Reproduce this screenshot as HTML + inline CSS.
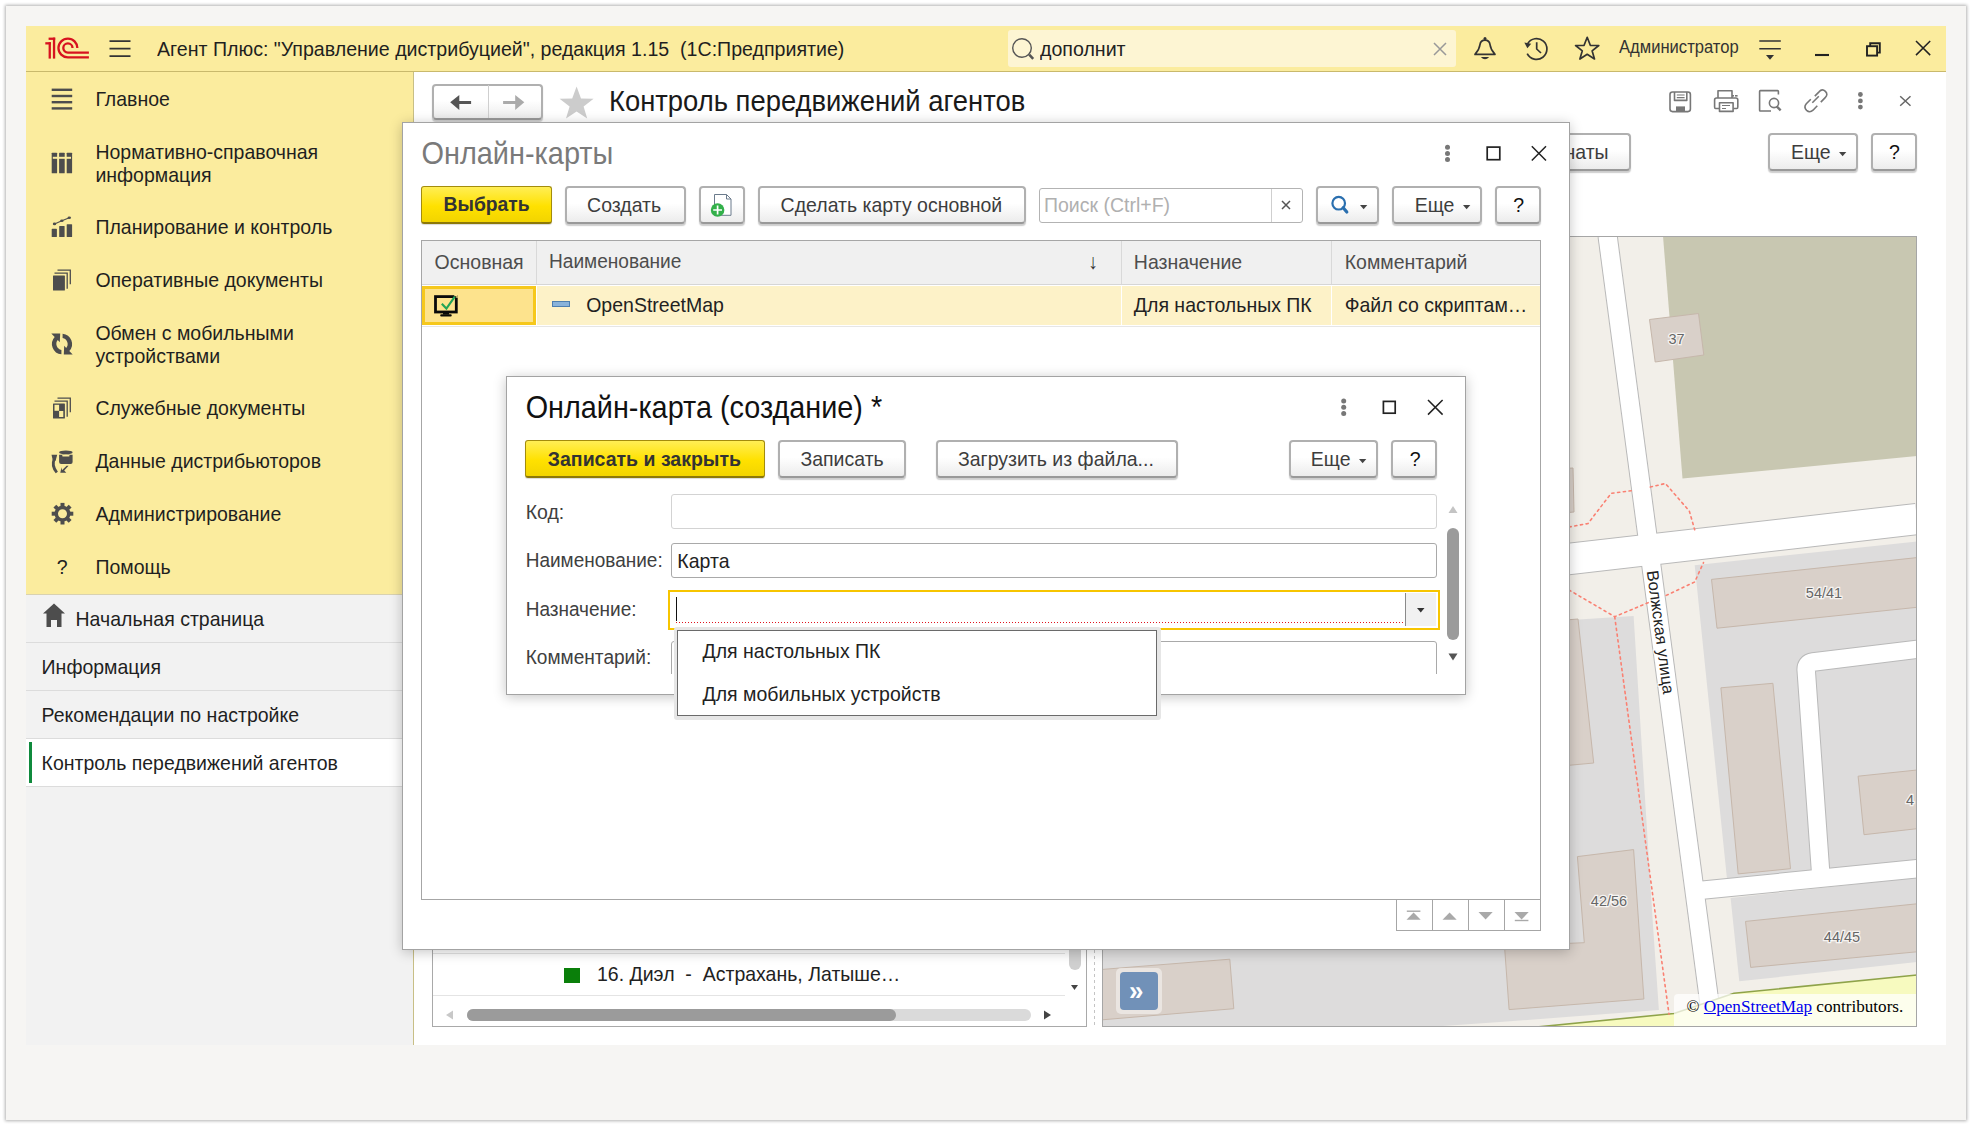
<!DOCTYPE html>
<html><head><meta charset="utf-8"><style>
html,body{margin:0;padding:0;width:1972px;height:1126px;overflow:hidden;background:#fff;}
body{position:relative;font-family:"Liberation Sans", sans-serif;}
.a{position:absolute;}
.t{position:absolute;white-space:pre;}
</style></head><body>
<div class="a" style="left:6px;top:6px;width:1960px;height:1114px;background:#f6f5f3;box-shadow:0 0 3px 1px rgba(0,0,0,0.30);"></div>
<div class="a" style="left:26px;top:26px;width:1920px;height:1019px;background:#fff;"></div>
<div class="a" style="left:26px;top:26px;width:1920px;height:45px;background:#fbec9e;"></div>
<div class="a" style="left:26px;top:71px;width:1920px;height:1px;background:#c9b96c;"></div>
<svg class="a" style="left:0px;top:0px;" width="140" height="72" viewBox="0 0 140 72"><g fill="#d7121f"><rect x="48.6" y="42.2" width="2.3" height="16.4"/><rect x="45.3" y="42.2" width="5.6" height="2.3"/><rect x="52.9" y="37.6" width="2.3" height="21"/><rect x="48.6" y="37.6" width="6.6" height="2.3"/></g><g fill="none" stroke="#d7121f" stroke-width="2.3"><path d="M77.35 48 A9.45 9.45 0 1 0 67.9 57.45 L88.9 57.45"/><path d="M72.5 48 A4.6 4.6 0 1 0 67.9 52.6 L88.9 52.6"/></g></svg>
<svg class="a" style="left:0px;top:0px;" width="140" height="72" viewBox="0 0 140 72"><g stroke="#333" stroke-width="1.8"><path d="M109.5 41.2H130.5M109.5 48.7H130.5M109.5 56.2H130.5"/></g></svg>
<div class="t" style="left:157.0px;top:36.90px;font-size:19.6px;line-height:24px;color:#1f1f1f;transform:scaleY(1.065);transform-origin:0 18.80px;">Агент Плюс: "Управление дистрибуцией", редакция 1.15  (1С:Предприятие)</div>
<div class="a" style="left:1008px;top:30px;width:448px;height:37px;background:#fdf5d3;border-radius:3px;"></div>
<svg class="a" style="left:1000px;top:26px;" width="460" height="46" viewBox="0 0 460 46"><circle cx="22" cy="22" r="9.3" fill="none" stroke="#555" stroke-width="1.4"/><path d="M29.2 28.6 L33.2 32.8" stroke="#555" stroke-width="2.6"/><path d="M434 17 L446 29 M446 17 L434 29" stroke="#999" stroke-width="1.5"/></svg>
<div class="t" style="left:1040.0px;top:36.90px;font-size:19.6px;line-height:24px;color:#222;transform:scaleY(1.065);transform-origin:0 18.80px;">дополнит</div>
<svg class="a" style="left:1460px;top:28px;" width="160" height="44" viewBox="0 0 160 44"><g fill="none" stroke="#333" stroke-width="1.7" stroke-linejoin="round"><path d="M15 26.4 C18.5 22.5 19.6 20 20 16.5 C20.5 13.5 22.2 12.2 25 12.2 C27.8 12.2 29.5 13.5 30 16.5 C30.4 20 31.5 22.5 35 26.4 Z"/><path d="M67.2 25.6 A10.4 10.4 0 1 0 67.5 15.8"/><path d="M76.7 14.2 V21 L81 25"/><path d="M127.2 9.3 L130.3 17.3 L138.8 17.5 L132.1 22.8 L134.5 31 L127.2 26.3 L119.9 31 L122.3 22.8 L115.6 17.5 L124.1 17.3 Z"/></g><circle cx="25" cy="10.6" r="1.5" fill="#333"/><path d="M20.8 28.9 H29.2 Q25 33.5 20.8 28.9 Z" fill="#333"/><path d="M64.3 14.6 L71.2 15.8 L67.4 20.3 Z" fill="#333"/></svg>
<div class="t" style="left:1619.0px;top:37.44px;font-size:16.6px;line-height:21px;color:#333;transform:scaleY(1.065);transform-origin:0 16.26px;">Администратор</div>
<svg class="a" style="left:1740px;top:30px;" width="206" height="36" viewBox="0 0 206 36"><g stroke="#333" stroke-width="1.6"><path d="M19.3 11 H40.8 M19.3 18.8 H40.8"/></g><path d="M26 25 H34 L30 29.8 Z" fill="#333"/><path d="M75 25 H89" stroke="#222" stroke-width="2.1"/><g fill="none" stroke="#222" stroke-width="1.9"><rect x="127" y="16.2" width="10.1" height="9.4"/><path d="M130.2 16.2 V13.3 H139.8 V22.6 H137.1"/></g><path d="M176 11 L190.2 25.1 M190.2 11 L176 25.1" stroke="#222" stroke-width="1.5"/></svg>
<div class="a" style="left:26px;top:72px;width:387px;height:522px;background:#fbec9e;"></div>
<div class="a" style="left:26px;top:594px;width:387px;height:451px;background:#f2f2f2;"></div>
<div class="a" style="left:413px;top:72px;width:1px;height:973px;background:#c8bf86;"></div>
<div class="t" style="left:95.4px;top:86.94px;font-size:19.5px;line-height:24px;color:#1f1f1f;transform:scaleY(1.065);transform-origin:0 18.76px;">Главное</div>
<div class="t" style="left:95.4px;top:140.24px;font-size:19.5px;line-height:24px;color:#1f1f1f;transform:scaleY(1.065);transform-origin:0 18.76px;">Нормативно-справочная</div>
<div class="t" style="left:95.4px;top:163.24px;font-size:19.5px;line-height:24px;color:#1f1f1f;transform:scaleY(1.065);transform-origin:0 18.76px;">информация</div>
<div class="t" style="left:95.4px;top:214.94px;font-size:19.5px;line-height:24px;color:#1f1f1f;transform:scaleY(1.065);transform-origin:0 18.76px;">Планирование и контроль</div>
<div class="t" style="left:95.4px;top:268.14px;font-size:19.5px;line-height:24px;color:#1f1f1f;transform:scaleY(1.065);transform-origin:0 18.76px;">Оперативные документы</div>
<div class="t" style="left:95.4px;top:320.94px;font-size:19.5px;line-height:24px;color:#1f1f1f;transform:scaleY(1.065);transform-origin:0 18.76px;">Обмен с мобильными</div>
<div class="t" style="left:95.4px;top:343.94px;font-size:19.5px;line-height:24px;color:#1f1f1f;transform:scaleY(1.065);transform-origin:0 18.76px;">устройствами</div>
<div class="t" style="left:95.4px;top:395.94px;font-size:19.5px;line-height:24px;color:#1f1f1f;transform:scaleY(1.065);transform-origin:0 18.76px;">Служебные документы</div>
<div class="t" style="left:95.4px;top:449.34px;font-size:19.5px;line-height:24px;color:#1f1f1f;transform:scaleY(1.065);transform-origin:0 18.76px;">Данные дистрибьюторов</div>
<div class="t" style="left:95.4px;top:501.94px;font-size:19.5px;line-height:24px;color:#1f1f1f;transform:scaleY(1.065);transform-origin:0 18.76px;">Администрирование</div>
<div class="t" style="left:95.4px;top:555.34px;font-size:19.5px;line-height:24px;color:#1f1f1f;transform:scaleY(1.065);transform-origin:0 18.76px;">Помощь</div>
<svg class="a" style="left:0px;top:0px;" width="100" height="600" viewBox="0 0 100 600"><g fill="#4d4d4d"><rect x="51.7" y="88.6" width="20.5" height="2.4"/><rect x="51.7" y="94.8" width="20.5" height="2.4"/><rect x="51.7" y="101" width="20.5" height="2.4"/><rect x="51.7" y="107.2" width="20.5" height="2.4"/><rect x="51.7" y="152.7" width="5.4" height="20.6" rx="0.6"/><rect x="59.1" y="152.7" width="5.6" height="20.6" rx="0.6"/><rect x="66.7" y="152.7" width="5.4" height="20.6" rx="0.6"/><rect x="51.7" y="228.8" width="5.2" height="8.2" rx="0.6"/><rect x="59.2" y="225.9" width="5.4" height="11.1" rx="0.6"/><rect x="66.7" y="224.2" width="5.4" height="12.8" rx="0.6"/><ellipse cx="54.5" cy="223.9" rx="1.7" ry="1.3"/><ellipse cx="61.9" cy="220.8" rx="1.7" ry="1.3"/><ellipse cx="69.3" cy="217.8" rx="1.7" ry="1.3"/><rect x="53" y="275.5" width="11.9" height="15.1" rx="0.5"/><rect x="53" y="403.5" width="11.9" height="15.1" rx="0.5"/></g><rect x="52.8" y="156.8" width="18.2" height="2" fill="#fbec9e"/><g fill="none" stroke="#4d4d4d" stroke-width="1.1"><path d="M54.5 223.9 L61.9 220.8 L69.3 217.8"/></g><g fill="none" stroke="#4d4d4d" stroke-width="1.3"><path d="M54.5 273.2 H67.2 V288.7 M57.5 270.1 H70.3 V284.2"/><path d="M54.5 401.2 H67.2 V416.7 M57.5 398.1 H70.3 V412.2"/></g><g fill="#fbec9e"><rect x="54.5" y="404.8" width="4.6" height="6"/><rect x="59.1" y="411" width="4.2" height="6"/></g><g fill="#4d4d4d" transform="translate(46 328)"><path d="M15.4 26.3 A10.4 10.4 0 0 1 8.7 8.9 L5.3 5.6 L14.2 5.6 L13.8 14.3 L11.8 12.1 A6 6 0 0 0 15.4 21.9 Z"/><path d="M15.4 26.3 A10.4 10.4 0 0 1 8.7 8.9 L5.3 5.6 L14.2 5.6 L13.8 14.3 L11.8 12.1 A6 6 0 0 0 15.4 21.9 Z" transform="rotate(180 16 16)"/></g><g fill="#4d4d4d"><ellipse cx="65.85" cy="452.4" rx="6.75" ry="1.9"/><path d="M59.1 454.8 H72.6 V462 Q72.6 463.9 70.6 463.9 H61.1 Q59.1 463.9 59.1 462 Z"/><path d="M51.5 454.8 H57.2 L55.6 460.8 L52.9 460.8 Z"/><path d="M60.3 472.7 H66.3 L64.2 470.5 L68.6 465.7 L66.6 465.7 L62 470.2 L61.5 467.3 Z"/></g><path d="M54.3 459 Q51.2 465.5 56.8 472.5" fill="none" stroke="#4d4d4d" stroke-width="2.8"/><ellipse cx="65.85" cy="455.7" rx="3.8" ry="0.9" fill="#fbec9e"/><g transform="translate(62.5 513.7)"><g fill="#4d4d4d"><rect x="-2" y="-10.8" width="4" height="5" transform="rotate(0)"/><rect x="-2" y="-10.8" width="4" height="5" transform="rotate(45)"/><rect x="-2" y="-10.8" width="4" height="5" transform="rotate(90)"/><rect x="-2" y="-10.8" width="4" height="5" transform="rotate(135)"/><rect x="-2" y="-10.8" width="4" height="5" transform="rotate(180)"/><rect x="-2" y="-10.8" width="4" height="5" transform="rotate(225)"/><rect x="-2" y="-10.8" width="4" height="5" transform="rotate(270)"/><rect x="-2" y="-10.8" width="4" height="5" transform="rotate(315)"/></g><circle r="6.2" fill="none" stroke="#4d4d4d" stroke-width="3.4"/></g></svg>
<div class="t" style="left:56.7px;top:555.34px;font-size:19.5px;line-height:24px;color:#222;transform:scaleY(1.065);transform-origin:0 18.76px;">?</div>
<div class="a" style="left:26px;top:594px;width:387px;height:1px;background:#d9d2b0;"></div>
<div class="a" style="left:26px;top:642px;width:387px;height:1px;background:#dcdcdc;"></div>
<div class="a" style="left:26px;top:690px;width:387px;height:1px;background:#dcdcdc;"></div>
<div class="a" style="left:26px;top:738px;width:387px;height:1px;background:#dcdcdc;"></div>
<div class="a" style="left:26px;top:786px;width:387px;height:1px;background:#dcdcdc;"></div>
<div class="a" style="left:26px;top:739px;width:387px;height:47px;background:#fff;"></div>
<div class="a" style="left:29px;top:742px;width:3px;height:41px;background:#0f8a3c;"></div>
<svg class="a" style="left:40px;top:600px;" width="30" height="30" viewBox="0 0 30 30"><path fill="#4d4d4d" d="M3 13.5 L14 3.5 L25 13.5 H21.5 V27 H17 V20 H11 V27 H6.5 V13.5 Z"/></svg>
<div class="t" style="left:75.5px;top:606.94px;font-size:19.5px;line-height:24px;color:#1f1f1f;transform:scaleY(1.065);transform-origin:0 18.76px;">Начальная страница</div>
<div class="t" style="left:41.6px;top:654.94px;font-size:19.5px;line-height:24px;color:#1f1f1f;transform:scaleY(1.065);transform-origin:0 18.76px;">Информация</div>
<div class="t" style="left:41.6px;top:703.24px;font-size:19.5px;line-height:24px;color:#1f1f1f;transform:scaleY(1.065);transform-origin:0 18.76px;">Рекомендации по настройке</div>
<div class="t" style="left:41.6px;top:750.74px;font-size:19.5px;line-height:24px;color:#1f1f1f;transform:scaleY(1.065);transform-origin:0 18.76px;">Контроль передвижений агентов</div>
<div class="a" style="left:432px;top:84px;width:111px;height:36px;border:2px solid #b0b0b0;border-bottom:2px solid #999;border-radius:4px;box-sizing:border-box;background:linear-gradient(#ffffff 45%,#ececec);box-shadow:0 1.5px 1.2px rgba(0,0,0,0.2);border-radius:4px;"></div>
<div class="a" style="left:488px;top:85px;width:1px;height:33px;background:#cfcfcf;"></div>
<svg class="a" style="left:440px;top:88px;" width="100" height="30" viewBox="0 0 100 30"><path d="M10.2 14.2 L19.3 6.9 V12.9 H31.1 V16.1 H19.3 V22 Z" fill="#555"/><path d="M84.3 14.2 L75.2 6.9 V12.9 H63.1 V16.1 H75.2 V22 Z" fill="#aaa"/></svg>
<svg class="a" style="left:556px;top:84px;" width="42" height="38" viewBox="0 0 42 38"><path d="M20.6 2.6 L25 14.6 L37.6 14.8 L27.6 22.6 L31.2 34.6 L20.6 27.4 L10 34.6 L13.6 22.6 L3.6 14.8 L16.2 14.6 Z" fill="#cccccc"/></svg>
<div class="t" style="left:609.0px;top:85.00px;font-size:27.4px;line-height:34px;color:#1a1a1a;transform:scaleY(1.07);transform-origin:0 26.50px;">Контроль передвижений агентов</div>
<svg class="a" style="left:1660px;top:84px;" width="260" height="34" viewBox="0 0 260 34"><g fill="none" stroke="#777" stroke-width="1.6" stroke-linejoin="round"><rect x="10" y="8" width="20.4" height="19.6" rx="2.5"/><path d="M14.5 8 V16.4 H26.8 V8"/><path d="M16.8 11 H24.6 M16.8 13.6 H24.6" stroke-width="1.2"/><path d="M58 14 V6.8 H72 V14"/><path d="M59 24.5 H55.6 Q54.6 24.5 54.6 23 V16 Q54.6 14 56.6 14 H75.8 Q77.8 14 77.8 16 V23 Q77.8 24.5 76.8 24.5 H73.5"/><rect x="59.5" y="18.8" width="13.6" height="8.6"/><path d="M62 21.5 H70 M62 24.5 H66" stroke-width="1.2"/><path d="M111 27 H100.2 Q99.6 27 99.6 26.2 V7.4 Q99.6 6.6 100.4 6.6 H117.6 Q118.4 6.6 118.4 7.4 V10.5"/><circle cx="114" cy="19" r="4.6"/><g transform="translate(-1.2 -3.2)"><path d="M152 18.5 L147.5 23 Q144.6 26.4 147.8 29.6 Q151 32.4 154.2 29.4 L158.5 25"/><path d="M156 15.3 L160.5 10.8 Q163.4 7.4 166.6 10.6 Q169.6 13.8 166.4 16.8 L162 21.3"/><path d="M153.5 22 L160 15.5"/></g></g><g fill="#777"><rect x="75" y="11" width="2.6" height="1.6"/><rect x="72" y="11" width="2" height="1.6"/><rect x="16" y="22.4" width="9" height="5.2"/><path d="M117.5 21.5 L121.5 25.5 L119.8 27.2 L115.8 23.2 Z"/><circle cx="200.4" cy="10.5" r="2.4"/><circle cx="200.4" cy="16.9" r="2.4"/><circle cx="200.4" cy="23.1" r="2.4"/></g><path d="M240.2 12.3 L250.5 21.8 M250.5 12.3 L240.2 21.8" stroke="#666" stroke-width="1.5"/></svg>
<div class="a" style="left:1500px;top:133px;width:131px;height:38px;border:2px solid #b0b0b0;border-bottom:2px solid #999;border-radius:4px;box-sizing:border-box;background:linear-gradient(#ffffff 45%,#ececec);box-shadow:0 1.5px 1.2px rgba(0,0,0,0.2);"></div>
<div class="t" style="left:1564.5px;top:139.84px;font-size:19.5px;line-height:24px;color:#3d3d3d;transform:scaleY(1.065);transform-origin:0 18.76px;">наты</div>
<div class="a" style="left:1768px;top:133px;width:90px;height:38px;border:2px solid #b0b0b0;border-bottom:2px solid #999;border-radius:4px;box-sizing:border-box;background:linear-gradient(#ffffff 45%,#ececec);box-shadow:0 1.5px 1.2px rgba(0,0,0,0.2);"></div>
<div class="t" style="left:1791.0px;top:139.84px;font-size:19.5px;line-height:24px;color:#3d3d3d;transform:scaleY(1.065);transform-origin:0 18.76px;">Еще</div>
<svg class="a" style="left:1838.35px;top:150.85px;" width="9.3" height="6.3" viewBox="0 0 9.3 6.3"><path d="M1 1 H8.3 L4.65 5.3 Z" fill="#444"/></svg>
<div class="a" style="left:1871px;top:133px;width:46px;height:38px;border:2px solid #b0b0b0;border-bottom:2px solid #999;border-radius:4px;box-sizing:border-box;background:linear-gradient(#ffffff 45%,#ececec);box-shadow:0 1.5px 1.2px rgba(0,0,0,0.2);"></div>
<div class="t" style="left:1888.9px;top:139.84px;font-size:19.5px;line-height:24px;color:#111;transform:scaleY(1.065);transform-origin:0 18.76px;">?</div>
<div class="a" style="left:432px;top:800px;width:655px;height:227px;border:1px solid #a9a9a9;box-sizing:border-box;background:#fff;"></div>
<div class="a" style="left:433px;top:953px;width:632px;height:1px;background:#e4e4e4;"></div>
<div class="a" style="left:433px;top:995px;width:632px;height:1px;background:#e4e4e4;"></div>
<div class="a" style="left:564px;top:967.6px;width:16px;height:15.0px;background:#0a7f0a;"></div>
<div class="t" style="left:597.0px;top:961.94px;font-size:19.5px;line-height:24px;color:#222;transform:scaleY(1.065);transform-origin:0 18.76px;">16. Диэл  -  Астрахань, Латыше…</div>
<div class="a" style="left:1069px;top:940px;width:12px;height:30px;background:#cfcfcf;border-radius:6px;"></div>
<svg class="a" style="left:1070.0px;top:984.1px;" width="9" height="7" viewBox="0 0 9 7"><path d="M1 1 H8 L4.5 6 Z" fill="#444"/></svg>
<div class="a" style="left:466.6px;top:1009px;width:564.4px;height:12px;background:#dadada;border-radius:6px;"></div>
<div class="a" style="left:466.6px;top:1009px;width:429.4px;height:12px;background:#9b9b9b;border-radius:6px;"></div>
<svg class="a" style="left:443px;top:1009px;" width="12" height="12" viewBox="0 0 12 12"><path d="M10 1.5 V10.5 L3 6 Z" fill="#c8c8c8"/></svg>
<svg class="a" style="left:1042px;top:1009px;" width="12" height="12" viewBox="0 0 12 12"><path d="M2 1.5 V10.5 L9 6 Z" fill="#444"/></svg>
<div class="a" style="left:1094px;top:800px;width:1px;height:227px;background-image:linear-gradient(#c4c4c4 50%,transparent 50%);background-size:1px 6px;"></div>
<svg class="a" style="left:1102px;top:236px;" width="815" height="791" viewBox="1102 236 815 791" font-family="Liberation Sans, sans-serif"><rect x="1102" y="236" width="815" height="791" fill="#f2efe9"/><polygon points="1663,236 1917,236 1917,456 1682.5,478.6" fill="#c8c7b1" stroke="none" stroke-width="1" /><polygon points="1694.7,565.2 1917,541.5 1917,860 1727,879" fill="#dddcdc" stroke="none" stroke-width="1" /><polygon points="1730.6,898 1917,877.4 1917,962 1739.3,981.3" fill="#dddcdc" stroke="none" stroke-width="1" /><polygon points="1100,650 1633.6,616 1653.3,930 1658.9,1010 1500,1022 1100,1050" fill="#dddcdc" stroke="none" stroke-width="1" /><polygon points="1649.5,319.5 1698.5,313.5 1703.8,355 1655.2,362" fill="#d9d0c9" stroke="#c6b7ab" stroke-width="1" /><polygon points="1711.5,579.4 1917,557.6 1917,607.3 1717,628.2" fill="#d9d0c9" stroke="#c6b7ab" stroke-width="1" /><polygon points="1720.9,687.8 1772.9,683.3 1790.5,868.7 1738.2,873.9" fill="#d9d0c9" stroke="#c6b7ab" stroke-width="1" /><polygon points="1858.1,776.2 1917,770 1917,828.7 1864,834.7" fill="#d9d0c9" stroke="#c6b7ab" stroke-width="1" /><polygon points="1745.5,921.4 1917,903.8 1917,951.8 1750.7,967.4" fill="#d9d0c9" stroke="#c6b7ab" stroke-width="1" /><polygon points="1577.4,856.6 1633.6,849.6 1643.9,999 1509.1,1009.6 1504.5,946 1584.3,942.7" fill="#d9d0c9" stroke="#c6b7ab" stroke-width="1" /><polygon points="1540,622 1578,619 1593.7,763 1540,768" fill="#d9d0c9" stroke="#c6b7ab" stroke-width="1" /><polygon points="1100,969.6 1229.8,959.2 1233.8,1008.7 1100,1020" fill="#d9d0c9" stroke="#c6b7ab" stroke-width="1" /><polygon points="1540,470 1573,468 1574,512 1540,515" fill="#d9d0c9" stroke="#c6b7ab" stroke-width="1" /><path d="M1100 612.9 L1917 519" fill="none" stroke="#b9b9b9" stroke-width="32.4"/><path d="M1607.6 236 L1713 1030" fill="none" stroke="#b9b9b9" stroke-width="20.2"/><path d="M1917 649.3 L1813 662 Q1805.5 663 1806.2 670.5 L1820.6 872" fill="none" stroke="#b9b9b9" stroke-width="19.4"/><path d="M1700 890.4 L1917 868.7" fill="none" stroke="#b9b9b9" stroke-width="19.4"/><path d="M1100 612.9 L1917 519" fill="none" stroke="#fff" stroke-width="30.4"/><path d="M1607.6 236 L1713 1030" fill="none" stroke="#fff" stroke-width="18.2"/><path d="M1917 649.3 L1813 662 Q1805.5 663 1806.2 670.5 L1820.6 872" fill="none" stroke="#fff" stroke-width="17.4"/><path d="M1700 890.4 L1917 868.7" fill="none" stroke="#fff" stroke-width="17.4"/><polygon points="1100,1070 1674,1013.5 1734,993.3 1917,975 1917,1030 1100,1080" fill="#f7fabf" stroke="none" stroke-width="1" /><polyline points="1100,1070 1674,1013.5 1734,993.3 1917,975" fill="none" stroke="#8fa34a" stroke-width="1.6" /><polyline points="1569,527 1588,523.5 1611.2,493.3 1632.5,490.6" fill="none" stroke="#fa8072" stroke-width="1.6" stroke-dasharray="2.2 3.6" stroke-linecap="round"/><polyline points="1650.3,487 1665.4,483.5 1689.3,511 1694.7,529.7" fill="none" stroke="#fa8072" stroke-width="1.6" stroke-dasharray="2.2 3.6" stroke-linecap="round"/><polyline points="1569,590 1614.7,616.7 1648.5,602.5" fill="none" stroke="#fa8072" stroke-width="1.6" stroke-dasharray="2.2 3.6" stroke-linecap="round"/><polyline points="1666.2,595.4 1694.7,582 1703.5,562.6" fill="none" stroke="#fa8072" stroke-width="1.6" stroke-dasharray="2.2 3.6" stroke-linecap="round"/><polyline points="1614.7,616.7 1669,1014.2" fill="none" stroke="#fa8072" stroke-width="1.6" stroke-dasharray="2.2 3.6" stroke-linecap="round"/><text x="1676.5" y="344" font-size="14.5" fill="#666" text-anchor="middle" paint-order="stroke" stroke="rgba(255,255,255,0.75)" stroke-width="2.5">37</text><text x="1824" y="598" font-size="14.5" fill="#666" text-anchor="middle" paint-order="stroke" stroke="rgba(255,255,255,0.75)" stroke-width="2.5">54/41</text><text x="1609" y="906" font-size="14.5" fill="#666" text-anchor="middle" paint-order="stroke" stroke="rgba(255,255,255,0.75)" stroke-width="2.5">42/56</text><text x="1842" y="941.5" font-size="14.5" fill="#666" text-anchor="middle" paint-order="stroke" stroke="rgba(255,255,255,0.75)" stroke-width="2.5">44/45</text><text x="1906" y="805" font-size="14.5" fill="#666" paint-order="stroke" stroke="rgba(255,255,255,0.75)" stroke-width="2.5">4</text><text x="0" y="0" font-size="16.5" fill="#222" text-anchor="middle" transform="translate(1655 633) rotate(82.4)" paint-order="stroke" stroke="rgba(255,255,255,0.75)" stroke-width="2.5">Волжская улица</text></svg>
<div class="a" style="left:1102px;top:236px;width:815px;height:791px;border:1px solid #a6a6a6;box-sizing:border-box;"></div>
<div class="a" style="left:1674px;top:994px;width:242px;height:32px;background:rgba(255,255,255,0.72);border-top-left-radius:4px;"></div>
<div class="t" style="left:1686.6px;top:996.07px;font-size:17.1px;line-height:21px;color:#000;font-family:'Liberation Serif', serif;">© <span style="color:#0000ee;text-decoration:underline">OpenStreetMap</span> contributors.</div>
<div class="a" style="left:1116px;top:968px;width:46px;height:46px;background:rgba(255,255,255,0.45);border-radius:5px;"></div>
<div class="a" style="left:1120px;top:972px;width:38px;height:38px;background:#7191b8;border-radius:4px;"></div>
<div class="t" style="left:1129.0px;top:974.99px;font-size:26px;line-height:32px;color:#fff;font-weight:bold;transform:scaleY(1.07);transform-origin:0 25.01px;">»</div>
<div class="a" style="left:402px;top:122px;width:1168px;height:828px;background:#fff;border:1px solid #a3a3a3;box-sizing:border-box;box-shadow:0 2px 12px rgba(0,0,0,0.23);"></div>
<div class="t" style="left:421.5px;top:136.08px;font-size:28.9px;line-height:36px;color:#7a7a7a;transform:scaleY(1.07);transform-origin:0 28.02px;">Онлайн-карты</div>
<svg class="a" style="left:0px;top:0px;pointer-events:none;" width="1972" height="1126" viewBox="0 0 1972 1126"><g fill="#777"><circle cx="1447.5" cy="147.20000000000002" r="2.5"/><circle cx="1447.5" cy="153.4" r="2.5"/><circle cx="1447.5" cy="159.5" r="2.5"/></g><rect x="1487.2" y="147.1" width="12.6" height="12.6" fill="none" stroke="#222" stroke-width="1.7"/><path d="M1531.8000000000002 146.3 L1546.0 160.5 M1546.0 146.3 L1531.8000000000002 160.5" stroke="#222" stroke-width="1.5"/></svg>
<div class="a" style="left:421px;top:186px;width:131px;height:38px;border:1.5px solid #a38c0c;border-bottom:2px solid #8c7808;border-radius:3px;box-sizing:border-box;background:linear-gradient(#ffee55,#ffe100 55%,#f2d400);box-shadow:0 1px 1px rgba(0,0,0,0.15);"></div>
<div class="t" style="left:443.5px;top:193.31px;font-size:19.3px;line-height:24px;color:#333;font-weight:bold;transform:scaleY(1.065);transform-origin:0 18.69px;">Выбрать</div>
<div class="a" style="left:565px;top:186px;width:121px;height:38px;border:2px solid #b0b0b0;border-bottom:2px solid #999;border-radius:4px;box-sizing:border-box;background:linear-gradient(#ffffff 45%,#ececec);box-shadow:0 1.5px 1.2px rgba(0,0,0,0.2);"></div>
<div class="t" style="left:587.1px;top:193.24px;font-size:19.5px;line-height:24px;color:#3d3d3d;transform:scaleY(1.065);transform-origin:0 18.76px;">Создать</div>
<div class="a" style="left:699px;top:186px;width:46px;height:38px;border:2px solid #b0b0b0;border-bottom:2px solid #999;border-radius:4px;box-sizing:border-box;background:linear-gradient(#ffffff 45%,#ececec);box-shadow:0 1.5px 1.2px rgba(0,0,0,0.2);"></div>
<svg class="a" style="left:700px;top:186px;" width="45" height="38" viewBox="0 0 45 38"><path d="M14.5 8.5 H26.5 L31 13 V29.3 H14.5 Z" fill="#fff" stroke="#6b7b8c" stroke-width="1"/><path d="M26.5 8.5 V13 H31" fill="none" stroke="#6b7b8c" stroke-width="1"/><circle cx="17.6" cy="24" r="6.8" fill="#33b04a"/><path d="M17.6 19.6 V28.4 M13.2 24 H22" stroke="#fff" stroke-width="1.7"/></svg>
<div class="a" style="left:758px;top:186px;width:268px;height:38px;border:2px solid #b0b0b0;border-bottom:2px solid #999;border-radius:4px;box-sizing:border-box;background:linear-gradient(#ffffff 45%,#ececec);box-shadow:0 1.5px 1.2px rgba(0,0,0,0.2);"></div>
<div class="t" style="left:780.6px;top:193.24px;font-size:19.5px;line-height:24px;color:#3d3d3d;transform:scaleY(1.065);transform-origin:0 18.76px;">Сделать карту основной</div>
<div class="a" style="left:1039px;top:188px;width:264px;height:35px;border:1px solid #b3b3b3;border-radius:3px;box-sizing:border-box;background:#fff;"></div>
<div class="a" style="left:1271px;top:189px;width:1px;height:33px;background:#cfcfcf;"></div>
<div class="t" style="left:1044.0px;top:192.74px;font-size:19.5px;line-height:24px;color:#b0b0b0;transform:scaleY(1.065);transform-origin:0 18.76px;">Поиск (Ctrl+F)</div>
<svg class="a" style="left:1278px;top:197px;" width="16" height="16" viewBox="0 0 16 16"><path d="M4 4 L12 12 M12 4 L4 12" stroke="#555" stroke-width="1.5"/></svg>
<div class="a" style="left:1316px;top:186px;width:63px;height:38px;border:2px solid #b0b0b0;border-bottom:2px solid #999;border-radius:4px;box-sizing:border-box;background:linear-gradient(#ffffff 45%,#ececec);box-shadow:0 1.5px 1.2px rgba(0,0,0,0.2);"></div>
<svg class="a" style="left:1325px;top:192px;" width="30" height="26" viewBox="0 0 30 26"><circle cx="13.7" cy="11.2" r="6.3" fill="none" stroke="#2a6faf" stroke-width="2.2"/><path d="M18.2 15.8 L21.8 20" stroke="#2a6faf" stroke-width="3.2" stroke-linecap="round"/></svg>
<svg class="a" style="left:1359.1499999999999px;top:204.35px;" width="9.3" height="6.3" viewBox="0 0 9.3 6.3"><path d="M1 1 H8.3 L4.65 5.3 Z" fill="#444"/></svg>
<div class="a" style="left:1392px;top:186px;width:90px;height:38px;border:2px solid #b0b0b0;border-bottom:2px solid #999;border-radius:4px;box-sizing:border-box;background:linear-gradient(#ffffff 45%,#ececec);box-shadow:0 1.5px 1.2px rgba(0,0,0,0.2);"></div>
<div class="t" style="left:1414.7px;top:193.24px;font-size:19.5px;line-height:24px;color:#3d3d3d;transform:scaleY(1.065);transform-origin:0 18.76px;">Еще</div>
<svg class="a" style="left:1462.1499999999999px;top:204.35px;" width="9.3" height="6.3" viewBox="0 0 9.3 6.3"><path d="M1 1 H8.3 L4.65 5.3 Z" fill="#444"/></svg>
<div class="a" style="left:1495px;top:186px;width:46px;height:38px;border:2px solid #b0b0b0;border-bottom:2px solid #999;border-radius:4px;box-sizing:border-box;background:linear-gradient(#ffffff 45%,#ececec);box-shadow:0 1.5px 1.2px rgba(0,0,0,0.2);"></div>
<div class="t" style="left:1513.2px;top:193.24px;font-size:19.5px;line-height:24px;color:#111;transform:scaleY(1.065);transform-origin:0 18.76px;">?</div>
<div class="a" style="left:421px;top:240px;width:1120px;height:660px;border:1px solid #a6a6a6;box-sizing:border-box;background:#fff;"></div>
<div class="a" style="left:422px;top:241px;width:1118px;height:43px;background:#f0f0f0;"></div>
<div class="a" style="left:422px;top:284px;width:1118px;height:1px;background:#d6d6d6;"></div>
<div class="a" style="left:536px;top:241px;width:1px;height:43px;background:#d9d9d9;"></div>
<div class="a" style="left:1121px;top:241px;width:1px;height:43px;background:#d9d9d9;"></div>
<div class="a" style="left:1331px;top:241px;width:1px;height:43px;background:#d9d9d9;"></div>
<div class="t" style="left:434.6px;top:249.94px;font-size:19.5px;line-height:24px;color:#4d4d4d;transform:scaleY(1.065);transform-origin:0 18.76px;">Основная</div>
<div class="t" style="left:549.0px;top:250.08px;font-size:19.1px;line-height:24px;color:#4d4d4d;transform:scaleY(1.065);transform-origin:0 18.62px;">Наименование</div>
<div class="t" style="left:1088.0px;top:249.94px;font-size:19.5px;line-height:24px;color:#333;transform:scaleY(1.065);transform-origin:0 18.76px;">↓</div>
<div class="t" style="left:1133.8px;top:249.94px;font-size:19.5px;line-height:24px;color:#4d4d4d;transform:scaleY(1.065);transform-origin:0 18.76px;">Назначение</div>
<div class="t" style="left:1344.7px;top:249.94px;font-size:19.5px;line-height:24px;color:#4d4d4d;transform:scaleY(1.065);transform-origin:0 18.76px;">Комментарий</div>
<div class="a" style="left:422px;top:286px;width:1118px;height:39px;background:#fdf2c8;"></div>
<div class="a" style="left:536px;top:286px;width:1px;height:39px;background:#fff;"></div>
<div class="a" style="left:1121px;top:286px;width:1px;height:39px;background:#fff;"></div>
<div class="a" style="left:1331px;top:286px;width:1px;height:39px;background:#fff;"></div>
<div class="a" style="left:422px;top:286px;width:114px;height:39px;background:#fde38d;border:3px solid #f6c81c;box-sizing:border-box;"></div>
<div class="a" style="left:422px;top:326px;width:1118px;height:1px;background:#e6e6e6;"></div>
<svg class="a" style="left:430px;top:292px;" width="32" height="28" viewBox="0 0 32 28"><rect x="5.5" y="4.6" width="20.8" height="15.4" fill="none" stroke="#0a0a0a" stroke-width="2.8"/><rect x="13" y="19" width="6" height="3.6" fill="#0a0a0a"/><rect x="10.2" y="22.3" width="11.5" height="2.3" rx="1" fill="#0a0a0a"/><path d="M24.3 3.6 L27 3.6 L27 6" fill="none" stroke="#fde38d" stroke-width="1.2"/><path d="M11.8 11.8 L16.4 16.6 L24.8 4.6" fill="none" stroke="#23a455" stroke-width="2.1"/></svg>
<div class="a" style="left:552px;top:300.6px;width:18px;height:6.399999999999977px;background:#89b3da;border:1px solid #4d7fb0;box-sizing:border-box;"></div>
<div class="t" style="left:586.2px;top:293.24px;font-size:19.5px;line-height:24px;color:#222;transform:scaleY(1.065);transform-origin:0 18.76px;">OpenStreetMap</div>
<div class="t" style="left:1133.8px;top:293.24px;font-size:19.5px;line-height:24px;color:#222;transform:scaleY(1.065);transform-origin:0 18.76px;">Для настольных ПК</div>
<div class="t" style="left:1344.7px;top:293.24px;font-size:19.5px;line-height:24px;color:#222;transform:scaleY(1.065);transform-origin:0 18.76px;">Файл со скриптам…</div>
<div class="a" style="left:1396px;top:899px;width:145px;height:32px;border:1px solid #a6a6a6;box-sizing:border-box;background:#fff;"></div>
<div class="a" style="left:1432px;top:900px;width:1px;height:30px;background:#a6a6a6;"></div>
<div class="a" style="left:1468px;top:900px;width:1px;height:30px;background:#a6a6a6;"></div>
<div class="a" style="left:1504px;top:900px;width:1px;height:30px;background:#a6a6a6;"></div>
<svg class="a" style="left:1396px;top:899px;" width="145" height="32" viewBox="0 0 145 32"><g fill="#a9a9a9"><rect x="10.8" y="11.5" width="13.6" height="1.4"/><path d="M10.5 20.8 L17.6 13.4 L24.7 20.8 Z"/><path d="M46.5 20.8 L53.6 13.4 L60.7 20.8 Z"/><path d="M82.5 13 L89.6 20.6 L96.7 13 Z"/><path d="M118.5 13 L125.6 20.6 L132.7 13 Z"/><rect x="118.8" y="20.8" width="13.6" height="1.4"/></g></svg>
<div class="a" style="left:506px;top:376px;width:960px;height:319px;background:#fff;border:1px solid #a3a3a3;box-sizing:border-box;box-shadow:0 2px 12px rgba(0,0,0,0.23);"></div>
<div class="t" style="left:525.7px;top:390.32px;font-size:28.8px;line-height:36px;color:#111;transform:scaleY(1.07);transform-origin:0 27.98px;">Онлайн-карта (создание) *</div>
<svg class="a" style="left:0px;top:0px;pointer-events:none;" width="1972" height="1126" viewBox="0 0 1972 1126"><g fill="#777"><circle cx="1343.7" cy="401.1" r="2.5"/><circle cx="1343.7" cy="407.3" r="2.5"/><circle cx="1343.7" cy="413.40000000000003" r="2.5"/></g><rect x="1383.3999999999999" y="401.40000000000003" width="11.8" height="11.8" fill="none" stroke="#222" stroke-width="1.7"/><path d="M1428.0 400.0 L1442.6 414.6 M1442.6 400.0 L1428.0 414.6" stroke="#222" stroke-width="1.5"/></svg>
<div class="a" style="left:525px;top:440px;width:240px;height:38px;border:1.5px solid #a38c0c;border-bottom:2px solid #8c7808;border-radius:3px;box-sizing:border-box;background:linear-gradient(#ffee55,#ffe100 55%,#f2d400);box-shadow:0 1px 1px rgba(0,0,0,0.15);"></div>
<div class="t" style="left:547.8px;top:446.54px;font-size:19.5px;line-height:24px;color:#333;font-weight:bold;transform:scaleY(1.065);transform-origin:0 18.76px;">Записать и закрыть</div>
<div class="a" style="left:778px;top:440px;width:128px;height:38px;border:2px solid #b0b0b0;border-bottom:2px solid #999;border-radius:4px;box-sizing:border-box;background:linear-gradient(#ffffff 45%,#ececec);box-shadow:0 1.5px 1.2px rgba(0,0,0,0.2);"></div>
<div class="t" style="left:800.4px;top:446.54px;font-size:19.5px;line-height:24px;color:#3d3d3d;transform:scaleY(1.065);transform-origin:0 18.76px;">Записать</div>
<div class="a" style="left:936px;top:440px;width:242px;height:38px;border:2px solid #b0b0b0;border-bottom:2px solid #999;border-radius:4px;box-sizing:border-box;background:linear-gradient(#ffffff 45%,#ececec);box-shadow:0 1.5px 1.2px rgba(0,0,0,0.2);"></div>
<div class="t" style="left:957.9px;top:446.54px;font-size:19.5px;line-height:24px;color:#3d3d3d;transform:scaleY(1.065);transform-origin:0 18.76px;">Загрузить из файла...</div>
<div class="a" style="left:1289px;top:440px;width:89px;height:38px;border:2px solid #b0b0b0;border-bottom:2px solid #999;border-radius:4px;box-sizing:border-box;background:linear-gradient(#ffffff 45%,#ececec);box-shadow:0 1.5px 1.2px rgba(0,0,0,0.2);"></div>
<div class="t" style="left:1310.8px;top:446.54px;font-size:19.5px;line-height:24px;color:#3d3d3d;transform:scaleY(1.065);transform-origin:0 18.76px;">Еще</div>
<svg class="a" style="left:1358.25px;top:457.85px;" width="9.3" height="6.3" viewBox="0 0 9.3 6.3"><path d="M1 1 H8.3 L4.65 5.3 Z" fill="#444"/></svg>
<div class="a" style="left:1391px;top:440px;width:46px;height:38px;border:2px solid #b0b0b0;border-bottom:2px solid #999;border-radius:4px;box-sizing:border-box;background:linear-gradient(#ffffff 45%,#ececec);box-shadow:0 1.5px 1.2px rgba(0,0,0,0.2);"></div>
<div class="t" style="left:1409.8px;top:446.54px;font-size:19.5px;line-height:24px;color:#111;transform:scaleY(1.065);transform-origin:0 18.76px;">?</div>
<div class="t" style="left:525.7px;top:499.54px;font-size:19.5px;line-height:24px;color:#404040;transform:scaleY(1.065);transform-origin:0 18.76px;">Код:</div>
<div class="t" style="left:525.7px;top:548.91px;font-size:19.0px;line-height:24px;color:#404040;transform:scaleY(1.065);transform-origin:0 18.59px;">Наименование:</div>
<div class="t" style="left:525.7px;top:597.91px;font-size:19.0px;line-height:24px;color:#404040;transform:scaleY(1.065);transform-origin:0 18.59px;">Назначение:</div>
<div class="t" style="left:525.7px;top:646.38px;font-size:19.1px;line-height:24px;color:#404040;transform:scaleY(1.065);transform-origin:0 18.62px;">Комментарий:</div>
<div class="a" style="left:671px;top:494px;width:766px;height:35px;border:1px solid #d3d3d3;border-radius:3px;box-sizing:border-box;"></div>
<div class="a" style="left:671px;top:543px;width:766px;height:35px;border:1px solid #a9a9a9;border-radius:3px;box-sizing:border-box;"></div>
<div class="t" style="left:677.3px;top:548.74px;font-size:19.5px;line-height:24px;color:#222;transform:scaleY(1.065);transform-origin:0 18.76px;">Карта</div>
<div class="a" style="left:668px;top:589.5px;width:772px;height:40.0px;border:2.5px solid #f7c500;box-sizing:border-box;"></div>
<div class="a" style="left:1405px;top:593px;width:31px;height:33px;background:#f1f1f1;border-left:1px solid #8a8a8a;box-sizing:border-box;"></div>
<svg class="a" style="left:1415.75px;top:606.55px;" width="9.5" height="6.5" viewBox="0 0 9.5 6.5"><path d="M1 1 H8.5 L4.75 5.5 Z" fill="#333"/></svg>
<div class="a" style="left:676px;top:621.5px;width:729px;height:1.5px;background-image:linear-gradient(90deg,#e0141e 50%,transparent 50%);background-size:3px 1.5px;"></div>
<div class="a" style="left:676px;top:597px;width:1.2000000000000455px;height:24px;background:#111;"></div>
<div class="a" style="left:671px;top:641px;width:766px;height:59px;border:1px solid #a9a9a9;border-radius:3px;box-sizing:border-box;clip-path:inset(0 0 26px 0);"></div>
<svg class="a" style="left:1446px;top:502px;" width="14" height="14" viewBox="0 0 14 14"><path d="M2.5 11 L7 4 L11.5 11 Z" fill="#c4c4c4"/></svg>
<div class="a" style="left:1447px;top:528px;width:12px;height:112px;background:#9b9b9b;border-radius:6px;"></div>
<svg class="a" style="left:1446px;top:650px;" width="14" height="14" viewBox="0 0 14 14"><path d="M2.5 3.5 L7 10.5 L11.5 3.5 Z" fill="#555"/></svg>
<div class="a" style="left:673.5px;top:626.5px;width:487.0px;height:93.0px;background:#e6e6e6;border-radius:3px;"></div>
<div class="a" style="left:677px;top:630px;width:480px;height:86px;background:#fff;border:1.5px solid #6a6a6a;box-sizing:border-box;"></div>
<div class="t" style="left:702.5px;top:639.24px;font-size:19.5px;line-height:24px;color:#222;transform:scaleY(1.065);transform-origin:0 18.76px;">Для настольных ПК</div>
<div class="t" style="left:702.5px;top:682.34px;font-size:19.5px;line-height:24px;color:#222;transform:scaleY(1.065);transform-origin:0 18.76px;">Для мобильных устройств</div>
</body></html>
